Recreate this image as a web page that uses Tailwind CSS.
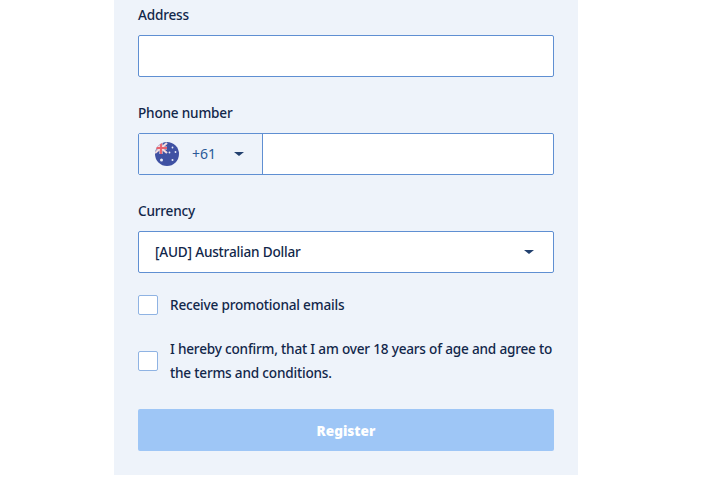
<!DOCTYPE html>
<html lang="en">
<head>
    <meta charset="UTF-8">
    <title>Register</title>
    <script src="https://cdn.jsdelivr.net/npm/@tailwindcss/browser@4"></script>
</head>
<body class="bg-white h-[480px] overflow-hidden font-['Noto_Sans',sans-serif] text-[13.6px] tracking-[-0.2px] font-medium text-[#12274a]">
    <div class="ml-[114px] w-[464px] h-[475px] bg-[#eef3fa] px-6 overflow-hidden">
        <!-- Address -->
        <label class="block mt-[5px] h-5 leading-5">Address</label>
        <input type="text" class="block mt-[10px] w-full h-[42px] bg-white border border-[#5f8fd2] rounded-[2px]">

        <!-- Phone -->
        <label class="block mt-[26px] h-5 leading-5">Phone number</label>
        <div class="flex mt-[10px] w-full h-[42px] bg-white border border-[#5f8fd2] rounded-[2px]">
            <div class="flex items-center w-[124px] shrink-0 bg-[#eef3fa] border-r border-[#5f8fd2] pl-4">
                <svg width="24" height="24" viewBox="0 0 24 24" class="shrink-0">
                    <defs><clipPath id="flag"><circle cx="12" cy="12" r="12"/></clipPath></defs>
                    <g clip-path="url(#flag)">
                        <rect width="24" height="24" fill="#3f51a3"/>
                        <path d="M0 1l12 10M12 1L0 11" stroke="#f3d9dc" stroke-width="2.2"/>
                        <path d="M6 0v12M0 6h12" stroke="#f3d9dc" stroke-width="3.2"/>
                        <path d="M6 0v12M0 6h12" stroke="#e8606c" stroke-width="1.9"/>
                        <circle cx="6.5" cy="18" r="1.5" fill="#e8ecf8"/>
                        <circle cx="17.5" cy="5.5" r="0.9" fill="#e8ecf8"/>
                        <circle cx="14.5" cy="10.5" r="0.9" fill="#e8ecf8"/>
                        <circle cx="20.5" cy="10" r="0.9" fill="#e8ecf8"/>
                        <circle cx="17.5" cy="18" r="1" fill="#e8ecf8"/>
                    </g>
                </svg>
                <span class="ml-[13px] mb-[2px] text-[14px] tracking-normal font-normal text-[#2a5a98]">+61</span>
                <span class="ml-[18px] w-0 h-0 border-x-[5px] border-x-transparent border-t-[4px] border-t-[#22406e]"></span>
            </div>
            <input type="text" class="flex-1 min-w-0 bg-white rounded-r-[2px]">
        </div>

        <!-- Currency -->
        <label class="block mt-[26px] h-5 leading-5">Currency</label>
        <div class="flex items-center justify-between mt-[10px] w-full h-[42px] bg-white border border-[#5f8fd2] rounded-[2px] pl-4 pr-[19px]">
            <span>[AUD] Australian Dollar</span>
            <span class="w-0 h-0 border-x-[5px] border-x-transparent border-t-[4px] border-t-[#22406e]"></span>
        </div>

        <!-- Checkboxes -->
        <div class="flex items-center mt-[22px] h-5">
            <span class="w-5 h-5 shrink-0 bg-white border border-[#8fb3e3] rounded-[2px]"></span>
            <span class="ml-3">Receive promotional emails</span>
        </div>
        <div class="flex items-center mt-[22px]">
            <span class="w-5 h-5 shrink-0 bg-white border border-[#8fb3e3] rounded-[2px]"></span>
            <span class="ml-3 leading-[24px]">I hereby confirm, that I am over 18 years of age and agree to the terms and conditions.</span>
        </div>

        <button class="block mt-[24px] pt-[2px] w-full h-[42px] bg-[#9ec6f6] rounded-[2px] text-white font-black text-[13.6px] tracking-normal">Register</button>
    </div>
</body>
</html>
